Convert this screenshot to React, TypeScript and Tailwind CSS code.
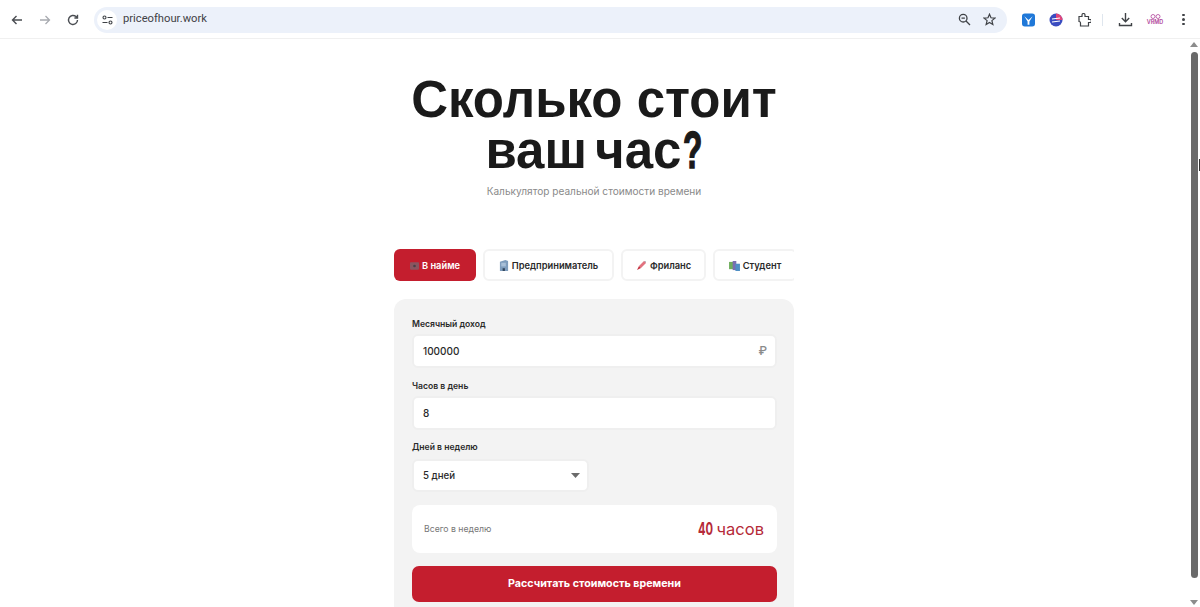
import React from "react";

const Cash = () => (
  <svg width="9" height="8" viewBox="0 0 11 9" className="shrink-0"><rect width="11" height="9" rx="1" fill="#8a5660" /><circle cx="5.5" cy="4.5" r="1.6" fill="#4a4046" /></svg>
);
const Building = () => (
  <svg width="10" height="11" viewBox="0 0 11 12" className="shrink-0"><path d="M1 12V2l6-2 3 1v11z" fill="#7f9dbd" /><rect x="4" y="9" width="2.5" height="3" fill="#33465c" /><rect x="2.5" y="3" width="5" height="4" fill="#a9c0d8" /></svg>
);
const Rocket = () => (
  <svg width="11" height="11" viewBox="0 0 11 11" className="shrink-0"><path d="M3 6l5-5 2 0 0 2-5 5z" fill="#e2727f" /><path d="M1 10l2-4 2 2z" fill="#c4303f" /><path d="M8 1h2v2z" fill="#b9c3cc" /></svg>
);
const Books = () => (
  <svg width="11" height="10" viewBox="0 0 12 11" className="shrink-0"><rect x="0" y="1" width="5" height="8" fill="#6fae5c" /><rect x="4" y="0" width="4" height="10" fill="#7a6fb0" /><rect x="7" y="3" width="5" height="8" fill="#4f8fc4" /></svg>
);

function Tab({ icon, label, active, className = "" }: { icon: React.ReactNode; label: string; active?: boolean; className?: string }) {
  return (
    <div
      className={`flex h-[32px] shrink-0 items-center justify-center gap-[3px] rounded-[6px] pt-[1px] text-[9.3px] font-semibold ${
        active ? "bg-[#c41e2e] text-white" : "border-2 border-[#f3f3f3] bg-white text-[#2a2a2a]"
      } ${className}`}
    >
      {icon}
      <span>{label}</span>
    </div>
  );
}

function Label({ children }: { children: React.ReactNode }) {
  return <div className="text-[8.6px] font-semibold leading-[12px] text-[#2a2a2a]">{children}</div>;
}

function Field({ value, suffix, className = "" }: { value: string; suffix?: string; className?: string }) {
  return (
    <div className={`flex h-[34px] items-center justify-between rounded-[6px] border-2 border-[#efefef] bg-white pl-[9px] pr-[8px] text-[10px] font-medium text-[#2a2a2a] ${className}`}>
      <span>{value}</span>
      {suffix && <span className="text-[12px] font-medium text-[#8a8a8a]">{suffix}</span>}
    </div>
  );
}

export default function App() {
  return (
    <div className="relative flex h-[607px] w-[1200px] flex-col overflow-hidden bg-white font-['Inter',sans-serif] text-[#1a1a1a]">
      <header className="flex h-[39px] shrink-0 items-center border-b border-[#f0f0f0] bg-white pt-[1px]">
        <div className="flex w-[94px] shrink-0 items-center gap-[14px] pl-[10px] text-[#4a4d52]">
          <svg width="14" height="14" viewBox="0 0 14 14" fill="none" stroke="currentColor" strokeWidth="1.4"><path d="M12 7H2.5M6.5 3 2.5 7l4 4" /></svg>
          <svg width="14" height="14" viewBox="0 0 14 14" fill="none" stroke="#a8abb0" strokeWidth="1.3"><path d="M2 7h9.5M7.5 3l4 4-4 4" /></svg>
          <svg width="14" height="14" viewBox="0 0 14 14" fill="none" stroke="currentColor" strokeWidth="1.4"><path d="M11.5 7A4.5 4.5 0 1 1 10 3.6L11.5 5M11.5 1.8V5H8.4" /></svg>
        </div>
        <div className="flex h-[26px] w-[913px] shrink-0 items-center rounded-full bg-[#ecf1fa] pl-[3px] pr-[11px]">
          <div className="flex h-[20px] w-[20px] items-center justify-center rounded-full bg-white">
            <svg width="11" height="10" viewBox="0 0 11 10" fill="none" stroke="#3f4246" strokeWidth="1.1"><circle cx="2.5" cy="2.5" r="1.5" /><path d="M5.5 2.5H10.5M.5 7.5H5.5" /><circle cx="8.5" cy="7.5" r="1.5" /></svg>
          </div>
          <span className="ml-[6px] font-['Roboto',sans-serif] text-[11.200px] text-[#3f4246]">priceofhour.work</span>
          <div className="ml-auto flex items-center gap-[12px] text-[#3f4246]">
            <svg width="13" height="13" viewBox="0 0 13 13" fill="none" stroke="currentColor" strokeWidth="1.3"><circle cx="5.2" cy="5.2" r="3.8" /><path d="M8 8l4 4M3.5 5.2h3.4" /></svg>
            <svg width="13" height="13" viewBox="0 0 13 13" fill="none" stroke="currentColor" strokeWidth="1.2"><path d="M6.500 1.200 8 4.800l3.900.3-3 2.500.95 3.800L6.500 9.400l-3.350 2 .95-3.800-3-2.500 3.900-.3z" /></svg>
          </div>
        </div>
        <div className="flex flex-1 items-center pl-[15px]">
          <svg width="13" height="14" viewBox="0 0 14 14" className="shrink-0"><rect width="14" height="14" rx="3" fill="#1f78d8" /><path d="M2.500 3 7 7l4.500-4L8 8.500V12H6V8.500z" fill="#fff" /></svg>
          <svg width="14" height="14" viewBox="0 0 14 14" className="ml-[14px] shrink-0"><circle cx="7" cy="7" r="6.500" fill="#3a4cc0" /><path d="M7 .5A6.500 6.500 0 0 1 13.500 7H7z" fill="#e0457a" /><path d="M3 6l8-1M3 9l8-1" stroke="#fff" strokeWidth="1.200" /></svg>
          <svg width="14" height="14" viewBox="0 0 14 14" fill="none" stroke="#3f4246" strokeWidth="1.200" className="ml-[14px] shrink-0"><path d="M2 3.500h3V2a1.500 1.500 0 0 1 3 0v1.500h3.500V6.500H13a1.500 1.500 0 0 1 0 3h-1.500V13H3.500V10a1.500 1.500 0 0 0-1.500-1.500z" /></svg>
          <div className="ml-[11px] h-[12px] w-px bg-[#dfe6ee]" />
          <svg width="15" height="15" viewBox="0 0 15 15" fill="none" stroke="#3f4246" strokeWidth="1.400" className="ml-[15px] shrink-0"><path d="M7.500 1v8.500M3.800 6l3.700 3.700L11.200 6M1.500 11v2.500h12V11" /></svg>
          <div className="ml-[12px] flex w-[20px] flex-col items-center text-[5.500px] font-semibold leading-[6px] text-[#b0449a]">
            <svg width="11" height="5" viewBox="0 0 11 5" fill="none" stroke="#b0449a" strokeWidth=".8"><circle cx="3" cy="2.500" r="2" /><circle cx="8" cy="2.500" r="2" /></svg>
            <span>VRMD</span>
          </div>
          <div className="ml-[17px] flex flex-col gap-[2px]">
            <span className="h-[2.500px] w-[2.500px] rounded-full bg-[#3f4246]" />
            <span className="h-[2.500px] w-[2.500px] rounded-full bg-[#3f4246]" />
            <span className="h-[2.500px] w-[2.500px] rounded-full bg-[#3f4246]" />
          </div>
        </div>
      </header>

      <div className="flex min-h-0 flex-1">
        <main className="flex min-w-0 flex-1 flex-col items-center overflow-hidden">
          <h1 className="mt-[35px] text-center font-['Liberation_Sans',sans-serif] text-[51px] font-bold leading-[51px] text-[#1a1a1a]">
            Сколько стоит
            <br />
            <span className="[word-spacing:-6px]">ваш час</span>
            <span className="ml-[2px] mr-[-12px] inline-block origin-left scale-x-[.62] [-webkit-text-stroke:1.5px_#1a1a1a]">?</span>
          </h1>
          <p className="mt-[8px] text-[10.100px] leading-[14px] text-[#8a8a8a]">Калькулятор реальной стоимости времени</p>

          <div className="mt-[51px] flex w-[400px] shrink-0 gap-[7px] overflow-hidden">
            <Tab active icon={<Cash />} label="В найме" className="w-[82px]" />
            <Tab icon={<Building />} label="Предприниматель" className="w-[131px]" />
            <Tab icon={<Rocket />} label="Фриланс" className="w-[85px]" />
            <Tab icon={<Books />} label="Студент" className="w-[84px]" />
          </div>

          <section className="mt-[18px] flex w-[400px] shrink-0 flex-col rounded-t-[12px] bg-[#f3f3f3] pb-[20px] pl-[18px] pr-[17px] pt-[19px]">
            <Label>Месячный доход</Label>
            <Field value="100000" suffix="₽" className="mt-[4px]" />
            <div className="mt-[12px]"><Label>Часов в день</Label></div>
            <Field value="8" className="mt-[4px]" />
            <div className="mt-[11px]"><Label>Дней в неделю</Label></div>
            <div className="mt-[6px] flex h-[33px] w-[177px] items-center justify-between rounded-[6px] border-2 border-[#efefef] bg-white pl-[9px] pr-[7px] text-[9.700px] font-medium text-[#2a2a2a]">
              <span className="pt-[2px]">5 дней</span>
              <svg width="9" height="5" viewBox="0 0 9 5"><path d="M0 0h9L4.500 5z" fill="#6b6b6b" /></svg>
            </div>
            <div className="mt-[13px] flex h-[48px] items-center justify-between rounded-[8px] bg-white pl-[12px] pr-[13px]">
              <span className="pt-[1px] text-[8.700px] text-[#777]">Всего в неделю</span>
              <span className="flex items-baseline text-[16.500px] leading-[20px] text-[#b52a38]">
                <span className="mr-[-10px] inline-block origin-left scale-x-[.62] text-[18px] font-bold">40</span>
                <span className="ml-[4px]">часов</span>
              </span>
            </div>
            <div className="mt-[13px] flex h-[36px] items-center justify-center rounded-[7px] bg-[#c41e2e] pt-[1px] text-[10.700px] font-bold text-white">
              Рассчитать стоимость времени
            </div>
          </section>
        </main>
        <aside className="flex w-[12px] shrink-0 flex-col items-center justify-between bg-white pb-[2px] pt-[3px]">
          <div className="flex flex-col items-center gap-[5px]">
            <svg width="8" height="5" viewBox="0 0 8 5"><path d="M4 0l4 5H0z" fill="#8c8c8c" /></svg>
            <div className="h-[526px] w-[7px] rounded-full bg-[#6a6a6a]" />
          </div>
          <svg width="8" height="5" viewBox="0 0 8 5"><path d="M4 5l4-5H0z" fill="#8c8c8c" /></svg>
        </aside>
      </div>
      <div className="absolute right-0 top-[159px] h-[12px] w-[1px] bg-[#333]" />
    </div>
  );
}
